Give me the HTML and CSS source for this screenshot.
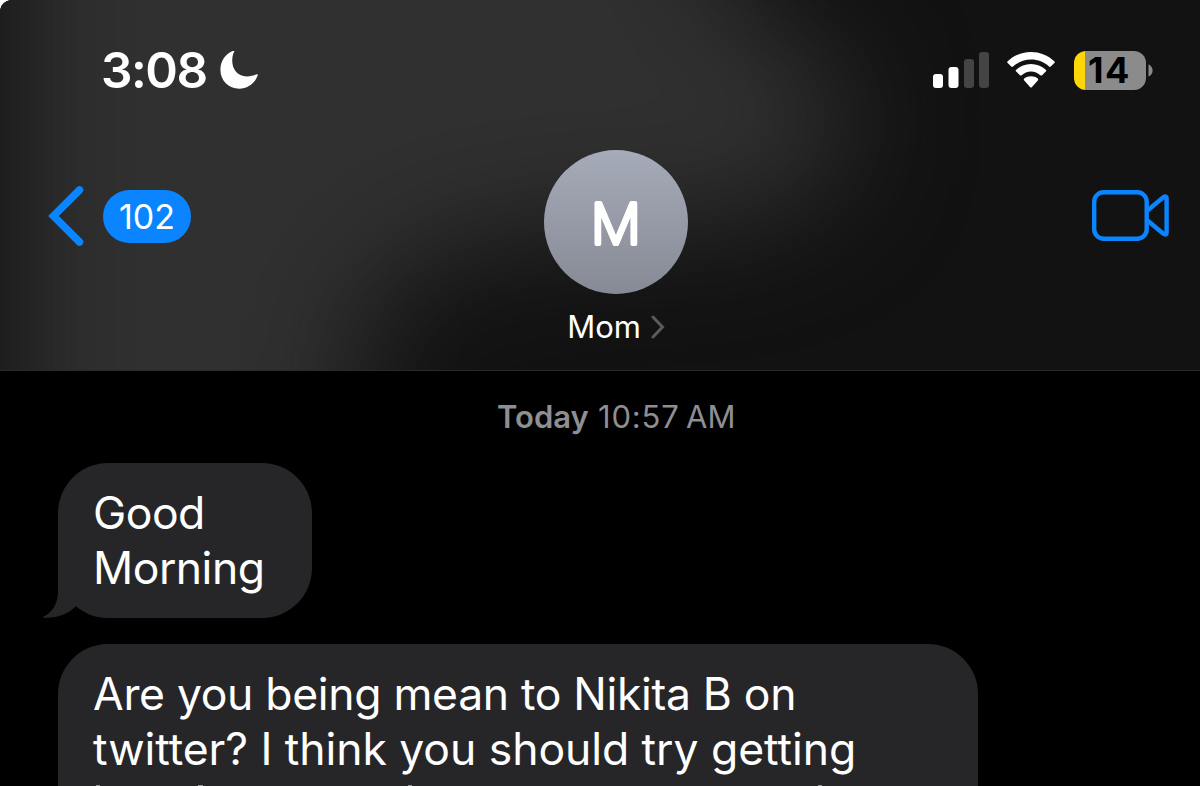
FILE: index.html
```
<!DOCTYPE html>
<html lang="en">
<head>
<meta charset="utf-8">
<title>Messages</title>
<link rel="stylesheet" href="styles.css">
</head>
<body>
<main class="phone">
  <header class="header">
    <svg class="backdrop" width="1200" height="370" viewBox="0 0 1200 370">
      <defs><filter id="soft" filterUnits="userSpaceOnUse" x="-300" y="-350" width="1800" height="1100" color-interpolation-filters="sRGB"><feGaussianBlur stdDeviation="58"/></filter></defs>
      <path d="M15 -300H600L740 0L850 80L840 180L740 225L560 230L430 255L360 320L350 620H15Z" fill="#303031" filter="url(#soft)"/>
    </svg>
    <div class="status">
      <div class="clock">
        <span class="time">3:08</span>
        <svg class="moon" width="38" height="38" viewBox="0 0 38 38"><path d="M14.200 .6C9.500 10.500 13 25.500 27 25.500C31 25.500 34 24.500 36.600 23.300C37.600 22.900 38 23.500 37.600 24.700C34.500 32.800 27.500 37.700 19.300 37.700C8.500 37.700 .4 29.500 .4 18.800C.4 10.300 5.300 3 12.700 .1C14 -.3 14.700 -.2 14.200 .6Z"/></svg>
      </div>
      <div class="indicators">
        <svg class="signal" width="56" height="36" viewBox="0 0 56 36"><g fill="#fff"><rect y="22" width="10" height="14" rx="3"/><rect x="15.500" y="15" width="10" height="21" rx="3"/></g><g fill="#444445"><rect x="31" y="7" width="10" height="29" rx="3"/><rect x="46" width="10" height="36" rx="3"/></g></svg>
        <svg class="wifi" width="48" height="36" viewBox="0 0 48 36"><path d="M24 0C33 0 41 3.400 47.300 9.200Q48.300 10.100 47.300 11.100L43.800 14.500Q42.900 15.300 42 14.500C37 10.200 31 7.600 24 7.600S11 10.200 6 14.500Q5.100 15.300 4.200 14.500L.7 11.100Q-.3 10.100 .7 9.200C7 3.400 15 0 24 0Z"/><path d="M24 12C29.700 12 34.600 14.100 38.800 17.700Q39.800 18.600 38.800 19.600L35.100 23.200Q34.200 24 33.300 23.200C30.700 21 27.700 19.500 24 19.500S17.300 21 14.700 23.200Q13.800 24 12.900 23.200L9.200 19.600Q8.200 18.600 9.200 17.700C13.400 14.100 18.300 12 24 12Z"/><path d="M24 24.200C26.500 24.200 28.900 25 30.800 26.500Q31.800 27.400 30.800 28.400L25 34.900Q24 35.900 23 34.900L17.200 28.400Q16.200 27.400 17.200 26.500C19.100 25 21.500 24.200 24 24.200Z"/></svg>
        <div class="battery"><span class="cell">14</span><svg width="5" height="13" viewBox="0 0 5 13"><path d="M.5 .3Q4.600 2.500 4.600 6.500T.5 12.700Z"/></svg></div>
      </div>
    </div>
    <nav class="nav">
      <div class="back">
        <svg width="36" height="62" viewBox="0 0 36 62"><path d="M31.500 5L5.500 31L31.500 57"/></svg>
        <span class="unread">102</span>
      </div>
      <div class="contact">
        <svg class="avatar" width="144" height="144" viewBox="0 0 144 144"><text x="72" y="94" text-anchor="middle">M</text></svg>
        <div class="name"><span>Mom</span><svg width="14" height="24" viewBox="0 0 14 24"><path d="M2 2L11.500 12L2 22"/></svg></div>
      </div>
      <svg class="video" width="77" height="51" viewBox="0 0 77 51"><rect x="2.200" y="2.200" width="52.500" height="46.600" rx="9.500"/><path d="M55.500 20.500L71 7.500Q74.600 5 74.600 8.500V42.500Q74.600 46 71 43.500L55.500 30.500"/></svg>
    </nav>
  </header>
  <section class="thread">
    <p class="stamp"><b>Today</b><span class="hour">10:57</span><span class="meridiem">AM</span></p>
    <div class="bubble first">
      <span class="line tight">Good</span><span class="line tight">Morning</span>
      <svg class="tail" width="38" height="52" viewBox="0 0 38 52"><path d="M16 0V25C16 38 10 47 1.500 50.500Q0 51.500 2 51.700C14 52.500 26 48.500 34 40V0Z"/></svg>
    </div>
    <div class="bubble second">
      <span class="line ask">Are you being mean to Nikita B on</span><span class="line advice">twitter? I think you should try getting</span>
      <svg class="next-line" width="760" height="9" viewBox="0 0 760 9"><path d="M3 8.500H7M105 8.500H110M315 8.500H319M725 8.500H729"/></svg>
    </div>
  </section>
</main>
</body>
</html>
```
FILE: styles.css
```
* { box-sizing: border-box; }
body { margin: 0; background: #fff; font-family: Inter, "Liberation Sans", sans-serif; }
.phone { width: 1200px; height: 786px; overflow: hidden; background: #000; color: #fff; border-top-left-radius: 12px; }
.header { position: relative; height: 371px; border-bottom: 1px solid #2a2a2b; background: #121213; }
.backdrop { position: absolute; left: 0; top: 0; }
.status { position: relative; display: flex; justify-content: space-between; align-items: center; height: 140px; padding: 0 47px 0 101px; }
.clock { display: flex; align-items: center; gap: 13px; }
.time { font-size: 49.500px; font-weight: 600; line-height: 60px; width: 106px; white-space: nowrap; letter-spacing: -1.500px; }
.moon, .wifi { fill: #fff; }
.indicators { display: flex; align-items: center; }
.wifi { margin-left: 18px; }
.battery { display: flex; align-items: center; gap: 2px; margin-left: 19px; }
.battery svg { fill: #8b8b8b; }
.cell { width: 72px; height: 39px; border-radius: 12px; background: linear-gradient(90deg, #ffd60a 11px, #8b8b8b 11px); color: #000; font-size: 36px; font-weight: 700; line-height: 39px; padding-left: 14px; letter-spacing: 1.500px; }
.nav { position: relative; display: flex; justify-content: space-between; align-items: flex-start; padding: 10px 31px 0 48px; }
.back { display: flex; align-items: center; gap: 19px; width: 172px; margin-top: 35px; }
.back path { fill: none; stroke: #0a84ff; stroke-width: 7.500; stroke-linecap: round; }
.unread { width: 88px; height: 53px; border-radius: 27px; background: #0a84ff; font-size: 34px; line-height: 54px; text-align: center; }
.contact { width: 144px; margin-left: 324px; margin-right: auto; display: flex; flex-direction: column; align-items: center; }
.avatar { border-radius: 50%; background: linear-gradient(#a6abb9, #868a94); font-size: 56px; font-weight: 200; }
.avatar text { fill: #fff; stroke: #fff; stroke-width: 4.200px; stroke-linejoin: round; }
.name { display: flex; align-items: center; gap: 10px; margin-top: 13px; font-size: 31px; line-height: 40px; }
.name path { fill: none; stroke: #5b5b5f; stroke-width: 3; stroke-linecap: round; }
.video { margin-top: 40px; fill: none; stroke: #0a84ff; stroke-width: 4.400; }
.thread { padding: 0 58px; }
.stamp { display: flex; margin: 27px 0 0 439px; color: #8e8e93; font-size: 31px; line-height: 38px; }
.stamp b { font-weight: 600; width: 101px; }
.hour { width: 88px; letter-spacing: .8px; }
.bubble { position: relative; display: flex; flex-direction: column; border-radius: 50px; background: #262629; font-size: 44.500px; line-height: 55px; padding: 23px 35px; }
.first { width: 254px; height: 155px; margin-top: 27px; }
.second { width: 920px; height: 190px; margin-top: 26px; }
.line { white-space: nowrap; width: max-content; }
.tight { letter-spacing: -.5px; }
.ask { letter-spacing: -.32px; }
.advice { letter-spacing: -.06px; }
.next-line { fill: none; stroke: #98989a; stroke-width: 1; }
.tail { position: absolute; left: -16px; bottom: 0; fill: #262629; }
```
